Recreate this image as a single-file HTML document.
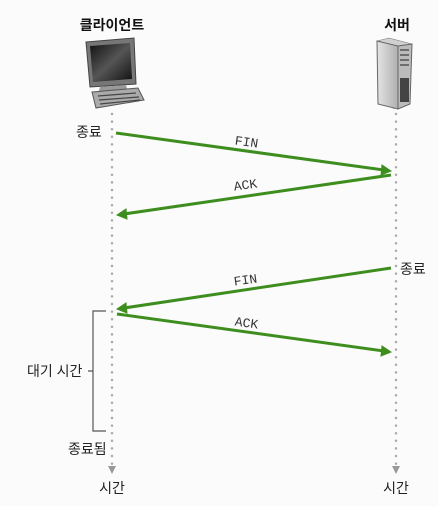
<!DOCTYPE html>
<html><head><meta charset="utf-8"><style>
body{margin:0;background:#fbfbfb;width:438px;height:501px;overflow:hidden}
</style></head><body>
<svg width="438" height="501" viewBox="0 0 438 501" xmlns="http://www.w3.org/2000/svg" font-family="'Liberation Sans','Noto Sans CJK KR',sans-serif">
<defs>
<linearGradient id="scr" x1="0" y1="0" x2="1" y2="1"><stop offset="0" stop-color="#111"/><stop offset=".5" stop-color="#555"/><stop offset="1" stop-color="#111"/></linearGradient>
<linearGradient id="srv" x1="0" y1="0" x2="1" y2="0"><stop offset="0" stop-color="#e4e4e4"/><stop offset="1" stop-color="#b0b0b0"/></linearGradient>
</defs>
<text x="112" y="30" font-size="14" font-weight="bold" text-anchor="middle" fill="#111">클라이언트</text>
<text x="397" y="30" font-size="14" font-weight="bold" text-anchor="middle" fill="#111">서버</text>
<path d="M86 42 L134 38 L136 84 L90 87 Z" fill="#777" stroke="#444"/>
<path d="M90 46 L130 43 L132 79 L93 82 Z" fill="url(#scr)"/>
<path d="M100 87 L126 85 L128 92 L98 94 Z" fill="#999"/>
<path d="M92 92 L138 88 L144 100 L96 108 Z" fill="#aaa" stroke="#555"/>
<path d="M98 96 L136 93 M99 100 L139 97 M100 104 L140 100" stroke="#444" stroke-width="1.2"/>
<!-- server -->
<path d="M377 41 L389 38 L412 44 L410 104 L393 109 Z" fill="#8a8a8a"/>
<path d="M377 41 L389 38 L412 44 L398 46 Z" fill="#d0d0d0" stroke="#777" stroke-width=".6"/>
<path d="M377 41 L398 46 L398 109 L378 104 Z" fill="url(#srv)" stroke="#666"/>
<path d="M398 46 L412 44 L410 104 L398 109 Z" fill="#bbb" stroke="#666"/>
<path d="M400 50h9M400 55h9M400 60h9M400 65h9" stroke="#555" stroke-width="1.5"/>
<rect x="400" y="78" width="9" height="24" fill="#444"/>
<line x1="112" y1="114" x2="112" y2="464" stroke="#aaa" stroke-width="2.5" stroke-linecap="round" stroke-dasharray="0 7.6"/>
<line x1="396" y1="114" x2="396" y2="464" stroke="#aaa" stroke-width="2.5" stroke-linecap="round" stroke-dasharray="0 7.6"/>
<path d="M108 466 L116 466 L112 474 Z" fill="#999"/>
<path d="M392 466 L400 466 L396 474 Z" fill="#999"/>
<g stroke="#3e8e1f" stroke-width="3" fill="#3e8e1f">
<line x1="116" y1="133" x2="384" y2="170"/><path d="M391 171 L382 165 L381 175 Z" stroke-width="1"/>
<line x1="391" y1="175" x2="124" y2="214"/><path d="M117 215 L126 209 L127 219 Z" stroke-width="1"/>
<line x1="391" y1="268" x2="124" y2="308"/><path d="M117 309 L126 303 L127 313 Z" stroke-width="1"/>
<line x1="117" y1="314" x2="384" y2="351"/><path d="M391 352 L382 346 L381 356 Z" stroke-width="1"/>
</g>
<g font-family="'Liberation Mono',monospace" font-size="13" fill="#333">
<text x="246" y="146" text-anchor="middle" transform="rotate(8 246 146)">FIN</text>
<text x="246" y="189" text-anchor="middle" transform="rotate(-8 246 189)">ACK</text>
<text x="246" y="284" text-anchor="middle" transform="rotate(-8 246 284)">FIN</text>
<text x="246" y="327" text-anchor="middle" transform="rotate(8 246 327)">ACK</text>
</g>
<g font-size="14" fill="#222">
<text x="76" y="137">종료</text>
<text x="400" y="274">종료</text>
<text x="27" y="376">대기 시간</text>
<text x="68" y="454">종료됨</text>
<text x="112" y="493" text-anchor="middle">시간</text>
<text x="396" y="493" text-anchor="middle">시간</text>
</g>
<path d="M106 311 H93 V431 H106 M88 371 H93" stroke="#555" fill="none" stroke-width="1.2"/>
</svg>
</body></html>
